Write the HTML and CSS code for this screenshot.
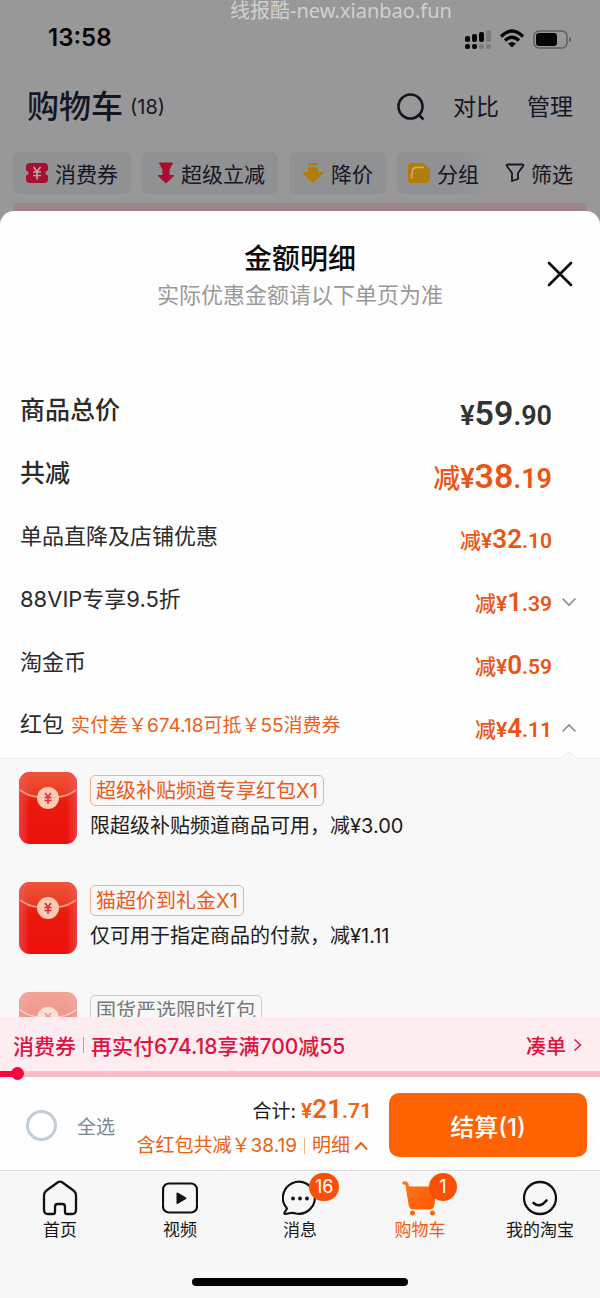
FILE: index.html
```html
<!DOCTYPE html>
<html lang="zh-CN">
<head>
<meta charset="utf-8">
<meta name="viewport" content="width=device-width, initial-scale=1">
<title>购物车 - 金额明细</title>
<link rel="stylesheet" href="styles.css">
</head>
<body>
<svg class="defs" width="0" height="0" aria-hidden="true">
  <defs>
    <linearGradient id="flap" x1="0" y1="0" x2="0" y2="1"><stop offset="0" stop-color="#f0553a"/><stop offset="1" stop-color="#e8361f"/></linearGradient>
    <linearGradient id="pocket" x1="0" y1="0" x2="0" y2="1"><stop offset="0" stop-color="#e5412c"/><stop offset=".45" stop-color="#ea1a0c"/><stop offset="1" stop-color="#ee0f0c"/></linearGradient>
    <linearGradient id="edge" x1="0" y1="0" x2="1" y2="0"><stop offset="0" stop-color="#f0606a" stop-opacity=".55"/><stop offset=".18" stop-color="#f0606a" stop-opacity="0"/><stop offset=".82" stop-color="#f0606a" stop-opacity="0"/><stop offset="1" stop-color="#f0606a" stop-opacity=".55"/></linearGradient>
    <linearGradient id="cartfill" x1="0" y1="0" x2="1" y2="1"><stop offset="0" stop-color="#ff7a1c"/><stop offset="1" stop-color="#ff5500"/></linearGradient>
    <symbol id="envelope" viewBox="0 0 58 72">
      <rect width="58" height="72" rx="11" fill="url(#pocket)"/>
      <path d="M0 18V11A11 11 0 0 1 11 0H47A11 11 0 0 1 58 11V18Q29 34 0 18Z" fill="url(#flap)"/>
      <rect width="58" height="72" rx="11" fill="url(#edge)"/>
      <path d="M1 18Q9 24 18 25M40 25Q49 24 57 18" fill="none" stroke="#ff9d85" stroke-width="1.6"/>
      <circle cx="29" cy="26" r="11" fill="#fcc9b2"/>
      <path d="M26 21l3 4 3-4M25.500 25.500h7M25.500 28.500h7M29 25v7" fill="none" stroke="#d92a3c" stroke-width="1.5"/>
    </symbol>
  </defs>
</svg>

<div class="app">
  <header class="cart-head">
    <div class="watermark">线报酷-new.xianbao.fun</div>
    <div class="status">
      <span class="clock">13:58</span>
      <svg class="status-icons" width="108" height="24" viewBox="0 0 108 24" aria-hidden="true">
        <g fill="#050505"><rect x="1" y="10" width="5" height="6" rx="2"/><rect x="8" y="8" width="5" height="8" rx="2"/><rect x="15" y="6" width="5" height="10" rx="2"/><rect x="1" y="18" width="5" height="5" rx="2"/><rect x="8" y="18" width="5" height="5" rx="2"/></g>
        <g fill="#7b7b7b"><rect x="22" y="4" width="5" height="12" rx="2"/><rect x="15" y="18" width="5" height="5" rx="2"/><rect x="22" y="18" width="5" height="5" rx="2"/></g>
        <path d="M37 10.500Q48 -.5 59 10.500M41 14.500Q48 8 55 14.500" fill="none" stroke="#050505" stroke-width="3.200"/>
        <path d="M44 17.500Q48 14.500 52 17.500L48 21.500Z" fill="#050505"/>
        <rect x="70" y="5" width="33" height="17" rx="5" fill="none" stroke="#5d5d5d" stroke-width="1.400"/>
        <rect x="72" y="7" width="21" height="13" rx="3" fill="#050505"/>
        <path d="M105 11v5q2-.5 2-2.500t-2-2.500z" fill="#5d5d5d"/>
      </svg>
    </div>
    <div class="title-row">
      <h1>购物车</h1><span class="count">(18)</span>
      <div class="actions">
        <button type="button" aria-label="搜索"><svg width="28" height="28" viewBox="0 0 28 28"><circle cx="13.500" cy="13.500" r="12" fill="none" stroke="#141623" stroke-width="2.600"/><path d="M21 21l5.500 5.500" stroke="#141623" stroke-width="2.600"/></svg></button>
        <button type="button">对比</button>
        <button type="button">管理</button>
      </div>
    </div>
    <nav class="chips">
      <button type="button" class="chip"><svg width="24" height="22" viewBox="0 0 24 22"><path d="M5 1H19A4 4 0 0 1 23 5V8.500A2.500 2.500 0 0 0 23 13.500V17A4 4 0 0 1 19 21H5A4 4 0 0 1 1 17V13.500A2.500 2.500 0 0 0 1 8.500V5A4 4 0 0 1 5 1Z" fill="#a90d30"/><path d="M8.500 5l3.500 4.500L15.500 5M8 10h8M8 13.500h8M12 9.500v8" fill="none" stroke="#b5a5a8" stroke-width="1.700"/></svg>消费券</button>
      <button type="button" class="chip"><svg class="drop" width="18" height="22" viewBox="0 0 18 22"><path d="M2.500 1H15.500L12 8V13.500H17L9 21 1 13.500H6V8Z" fill="#a90d30" stroke="#a90d30" stroke-linejoin="round"/></svg>超级立减</button>
      <button type="button" class="chip"><svg width="24" height="24" viewBox="0 0 24 24"><path d="M7 2H17V4.500H7Z M7 6.500H17V11H21.500Q23 11 22 12.500L13 21.500Q12 22.500 11 21.500L2 12.500Q1 11 2.500 11H7Z" fill="#b27d0b"/></svg>降价</button>
      <button type="button" class="chip fade"><svg width="24" height="22" viewBox="0 0 24 22"><path d="M5 1H15Q19 1 19 5H23V17Q23 21 19 21H5Q1 21 1 17V5Q1 1 5 1Z" fill="#b27d0b"/><path d="M19 5Q23 5 23 9V5Z" fill="#8f9193"/><path d="M4.500 16.500L5.500 9Q6 5.500 9.500 5.500H17" fill="none" stroke="#c9b27c" stroke-width="1.500"/></svg>分组</button>
      <button type="button" class="filter"><svg width="20" height="20" viewBox="0 0 20 20"><path d="M3 1.500H17Q19 1.500 18 3.300L13 10V16L7 18V10L2 3.300Q1 1.500 3 1.500Z" fill="none" stroke="#141623" stroke-width="1.800" stroke-linejoin="round"/></svg>筛选</button>
    </nav>
    <div class="banner-edge"></div>
  </header>

  <main class="sheet">
    <div class="sheet-head">
      <h2>金额明细</h2>
      <p>实际优惠金额请以下单页为准</p>
      <button type="button" class="close" aria-label="关闭"><svg width="26" height="26" viewBox="0 0 26 26"><path d="M2 2L24 24M24 2L2 24" stroke="#0a0a0a" stroke-width="2.600" stroke-linecap="round"/></svg></button>
    </div>

    <dl class="rows">
      <div class="row strong"><dt>商品总价</dt><dd class="price dark"><span>¥</span><b>59</b>.90</dd></div>
      <div class="row strong"><dt>共减</dt><dd class="price"><i>减</i><span>¥</span><b>38</b>.19</dd></div>
      <div class="row"><dt>单品直降及店铺优惠</dt><dd class="price"><i>减</i><span>¥</span><b>32</b>.10</dd></div>
      <div class="row"><dt>88VIP专享9.5折</dt><dd class="price"><i>减</i><span>¥</span><b>1</b>.39</dd><dd class="toggle"><button type="button" aria-label="展开"><svg width="16" height="10" viewBox="0 0 16 10"><path d="M1.500 1.500L8 8L14.500 1.500" fill="none" stroke="#8a8a8a" stroke-width="1.600"/></svg></button></dd></div>
      <div class="row"><dt>淘金币</dt><dd class="price"><i>减</i><span>¥</span><b>0</b>.59</dd></div>
      <div class="row"><dt>红包<small>实付差￥674.18可抵￥55消费券</small></dt><dd class="price"><i>减</i><span>¥</span><b>4</b>.11</dd><dd class="toggle"><button type="button" aria-label="收起"><svg width="16" height="10" viewBox="0 0 16 10"><path d="M1.500 8.500L8 2L14.500 8.500" fill="none" stroke="#8a8a8a" stroke-width="1.600"/></svg></button></dd></div>
    </dl>

    <div class="panel">
      <svg class="notch" width="16" height="8" viewBox="0 0 16 8" aria-hidden="true"><path d="M0 7L8 1L16 7V8H0Z" fill="#f8f8f8"/><path d="M0 7L8 1L16 7" fill="none" stroke="#ececec"/></svg>
      <ul class="coupons">
        <li><svg class="env" width="58" height="72"><use href="#envelope"/></svg><div><span class="tag">超级补贴频道专享红包X1</span><p>限超级补贴频道商品可用，减¥3.00</p></div></li>
        <li><svg class="env" width="58" height="72"><use href="#envelope"/></svg><div><span class="tag">猫超价到礼金X1</span><p>仅可用于指定商品的付款，减¥1.11</p></div></li>
        <li class="off"><svg class="env" width="58" height="72"><use href="#envelope"/></svg><div><span class="tag">国货严选限时红包</span></div></li>
      </ul>
    </div>
  </main>

  <section class="promo">
    <div class="promo-text">
      <strong>消费券</strong><span class="bar"></span><strong>再实付674.18享满700减55</strong>
      <a href="#more">凑单<svg width="9" height="14" viewBox="0 0 9 14"><path d="M1.500 1.500L7.500 7L1.500 12.500" fill="none" stroke="#df1140" stroke-width="1.500"/></svg></a>
    </div>
    <div class="track"><div class="done"></div></div>
  </section>

  <section class="checkout">
    <label class="all"><input type="checkbox">全选</label>
    <div class="sum">
      <div class="total">合计:<span class="price"><span>¥</span><b>21</b>.71</span></div>
      <div class="saved">含红包共减￥38.19<span class="bar"></span><button type="button">明细<svg width="14" height="10" viewBox="0 0 14 10"><path d="M1 8.500L7 2L13 8.500" fill="none" stroke="#e8620f" stroke-width="1.900"/></svg></button></div>
    </div>
    <button type="button" class="pay">结算(1)</button>
  </section>

  <nav class="tabs">
    <a href="#home"><span class="ico"><svg width="36" height="36" viewBox="0 0 36 36"><path d="M15.500 2.500Q18 .8 20.500 2.500L31.500 10.500Q34 12.500 34 15V30Q34 34 30 34H25Q23 34 23 32V27Q23 24 20.500 24H15.500Q13 24 13 27V32Q13 34 11 34H6Q2 34 2 30V15Q2 12.500 4.500 10.500Z" fill="none" stroke="#111" stroke-width="2.300"/></svg></span>首页</a>
    <a href="#video"><span class="ico"><svg width="36" height="36" viewBox="0 0 36 36"><rect x="1" y="3.500" width="34" height="29" rx="6" fill="none" stroke="#111" stroke-width="2.200"/><path d="M14.500 13.500v9.500q0 1.500 1.500.8l8-4.700q1-.8 0-1.600l-8-4.700q-1.500-.8-1.500.7z" fill="#111"/></svg></span>视频</a>
    <a href="#message"><span class="ico"><svg width="36" height="36" viewBox="0 0 36 36"><path d="M5 28.500A16 16 0 1 1 14 33.500Q11 32.500 8.500 33L3.500 34Q2 34 2.500 32.500Z" fill="none" stroke="#111" stroke-width="2.200" stroke-linejoin="round"/><g fill="#111"><circle cx="11" cy="18.500" r="1.900"/><circle cx="18" cy="18.500" r="1.900"/><circle cx="25" cy="18.500" r="1.900"/></g></svg><em class="badge">16</em></span>消息</a>
    <a href="#cart" class="on"><span class="ico"><svg width="36" height="36" viewBox="0 0 36 36"><path d="M1 2H4Q5.500 2 5.800 3.500L6.500 7H34L32 25Q31.500 29 28 29H11Q8 29 7.300 26L3.800 4H1Z" fill="url(#cartfill)" stroke="#ff6a10" stroke-linejoin="round"/><circle cx="10.500" cy="33" r="2.500" fill="#ff6413"/><circle cx="30.500" cy="33" r="2.500" fill="#ff6413"/></svg><em class="badge">1</em></span>购物车</a>
    <a href="#me"><span class="ico"><svg width="36" height="36" viewBox="0 0 36 36"><circle cx="18" cy="18" r="16" fill="none" stroke="#111" stroke-width="2.300"/><path d="M11.500 23Q18 28.500 24.500 20.500" fill="none" stroke="#111" stroke-width="2.600" stroke-linecap="round"/></svg></span>我的淘宝</a>
    <div class="home-bar"></div>
  </nav>
</div>
</body>
</html>
```
FILE: styles.css
```css
* { box-sizing: border-box; }
body { margin: 0; background: #f7f7f7; color: #2b2b2b; font-family: Inter, "Noto Sans CJK SC", sans-serif; }
h1, h2, p, dl, dd, ul { margin: 0; padding: 0; }
ul { list-style: none; }
i, em { font-style: normal; }
a { color: inherit; text-decoration: none; }
button { border: 0; padding: 0; background: none; font: inherit; color: inherit; cursor: pointer; }
svg { display: block; flex: none; }
.defs { position: absolute; }
.app { height: 100vh; min-height: 1100px; display: flex; flex-direction: column; overflow: hidden; }

.cart-head { position: relative; flex: none; background: #989898; color: #141623; padding-bottom: 14px; margin-bottom: -14px; }
.watermark { position: absolute; top: 0; left: 230px; font-size: 20px; line-height: 22px; color: #d0d0d0; font-family: "Noto Sans", "Noto Sans CJK SC", sans-serif; }
.status { height: 76px; padding: 0 28px 0 48px; display: flex; align-items: center; justify-content: space-between; color: #050505; }
.clock { font-size: 24px; font-weight: 600; line-height: 24px; }
.title-row { height: 62px; padding: 0 27px; display: flex; align-items: center; }
h1 { font-size: 32px; line-height: 40px; font-weight: 500; }
.count { margin-left: 7px; font-size: 20px; }
.actions { margin-left: auto; display: flex; align-items: center; gap: 28px; font-size: 23px; line-height: 32px; }
.chips { height: 56px; margin-top: 8px; padding: 6px 27px 8px 13px; display: flex; gap: 11px; font-size: 21px; }
.chip { height: 42px; padding: 0 13px 0 12px; display: flex; align-items: center; gap: 6px; border-radius: 6px; background: #8f9193; white-space: nowrap; }
.chip.fade { padding: 0 8px 0 10px; background: linear-gradient(90deg, #8f9193 70%, #989898); }
.drop { margin-left: 3px; }
.filter { height: 42px; margin-left: auto; display: flex; align-items: center; gap: 6px; white-space: nowrap; }
.banner-edge { height: 8px; margin: 1px 13px 0; background: #9c8487; border-radius: 3px 3px 0 0; }

.sheet { position: relative; flex: 1; min-height: 0; display: flex; flex-direction: column; background: #fefefe; border-radius: 14px 14px 0 0; }
.sheet-head { position: relative; flex: none; height: 169px; padding-top: 28px; text-align: center; }
h2 { font-size: 28px; line-height: 40px; font-weight: 500; color: #0c0c0c; }
.sheet-head p { font-size: 22px; line-height: 32px; color: #999; }
.close { position: absolute; top: 50px; right: 27px; }
.row { position: relative; height: 63px; padding: 0 48px 0 20px; display: flex; align-items: center; justify-content: space-between; }
dt { padding-bottom: 3px; font-size: 22px; line-height: 32px; }
dt small { margin-left: 7px; font-size: 19px; color: #ee5f1c; }
.strong dt { font-size: 25px; font-weight: 500; }
.price { font-family: Roboto, "Noto Sans CJK SC", sans-serif; font-size: 21px; line-height: 32px; font-weight: 600; color: #ea5514; white-space: nowrap; }
.price i { font-weight: 500; }
.price b { font-size: 26px; font-weight: 600; }
.row .price { padding-top: 5px; }
.strong .price { font-size: 27px; line-height: 40px; }
.strong .price b { font-size: 34px; }
.price.dark { color: #333; }
.toggle { position: absolute; right: 23px; top: 25px; }
.toggle button { display: block; padding: 3px 0; }

.panel { position: relative; flex: 1; min-height: 0; background: #f8f8f8; border-top: 1px solid #ececec; }
.notch { position: absolute; right: 23px; top: -8px; }
.coupons { height: 100%; padding: 13px 19px 0; overflow: hidden; }
.coupons li { height: 110px; display: flex; gap: 13px; color: #1c1c1c; font-size: 20px; line-height: 28px; }
.coupons p { margin-top: 6px; }
.tag { display: inline-block; margin-top: 3px; padding: 1px 5px 0; border: 1px solid #f3b08f; border-radius: 5px; color: #ea5a1a; line-height: 28px; vertical-align: top; }
.coupons .off { height: 72px; }
.off .env { opacity: .5; }
.off .tag { border-color: #ccc; color: #777; }

.promo { flex: none; background: #feedf0; color: #df1140; }
.promo-text { height: 54px; padding: 2px 18px 0 13px; display: flex; align-items: center; font-size: 21px; }
.promo strong { font-weight: 500; }
.bar { flex: none; width: 1px; height: 16px; margin: 0 7px; background: currentColor; opacity: .5; }
.promo a { margin-left: auto; display: flex; align-items: center; gap: 7px; font-size: 20px; font-weight: 500; }
.track { height: 6px; background: #fdbccb; }
.done { position: relative; width: 3%; height: 6px; background: #f7053f; }
.done::after { content: ""; position: absolute; right: -6px; top: -4px; width: 13px; height: 13px; border-radius: 50%; background: #f7053f; }

.checkout { flex: none; height: 93px; padding: 3px 13px 0 26px; display: flex; align-items: center; background: #fefefe; font-size: 19px; }
.all { display: flex; align-items: center; gap: 20px; color: #7c8794; white-space: nowrap; }
.all input { appearance: none; width: 31px; height: 31px; margin: 0; border: 3px solid #c4ccd4; border-radius: 50%; background: #fff; }
.sum { margin-left: auto; margin-right: 17px; padding-top: 6px; display: flex; flex-direction: column; align-items: flex-end; }
.total { line-height: 34px; color: #141623; }
.total .price { margin-left: 5px; color: #f26212; }
.saved { display: flex; align-items: center; line-height: 34px; color: #e8620f; white-space: nowrap; margin-right: 4px; }
.saved button { display: flex; align-items: center; gap: 4px; }
.pay { flex: 0 1 198px; height: 64px; border-radius: 10px; background: #ff6200; color: #fff; font-size: 24px; font-weight: 500; }

.tabs { position: relative; flex: none; height: 128px; padding-top: 9px; display: grid; grid-template-columns: repeat(5, 1fr); background: #f7f7f7; border-top: 1px solid #dcdcdc; font-size: 17px; line-height: 24px; color: #161616; }
.tabs a { display: flex; flex-direction: column; align-items: center; gap: 2px; height: 64px; }
.tabs .on { color: #ee5a14; }
.ico { position: relative; }
.badge { position: absolute; left: 27px; top: -7px; min-width: 28px; height: 28px; padding: 0 6px; border-radius: 14px; background: #fb4f08; color: #fff; font-size: 18px; line-height: 28px; text-align: center; }
.home-bar { position: absolute; bottom: 12px; left: 32%; right: 32%; height: 8px; border-radius: 4px; background: #000; }
```
